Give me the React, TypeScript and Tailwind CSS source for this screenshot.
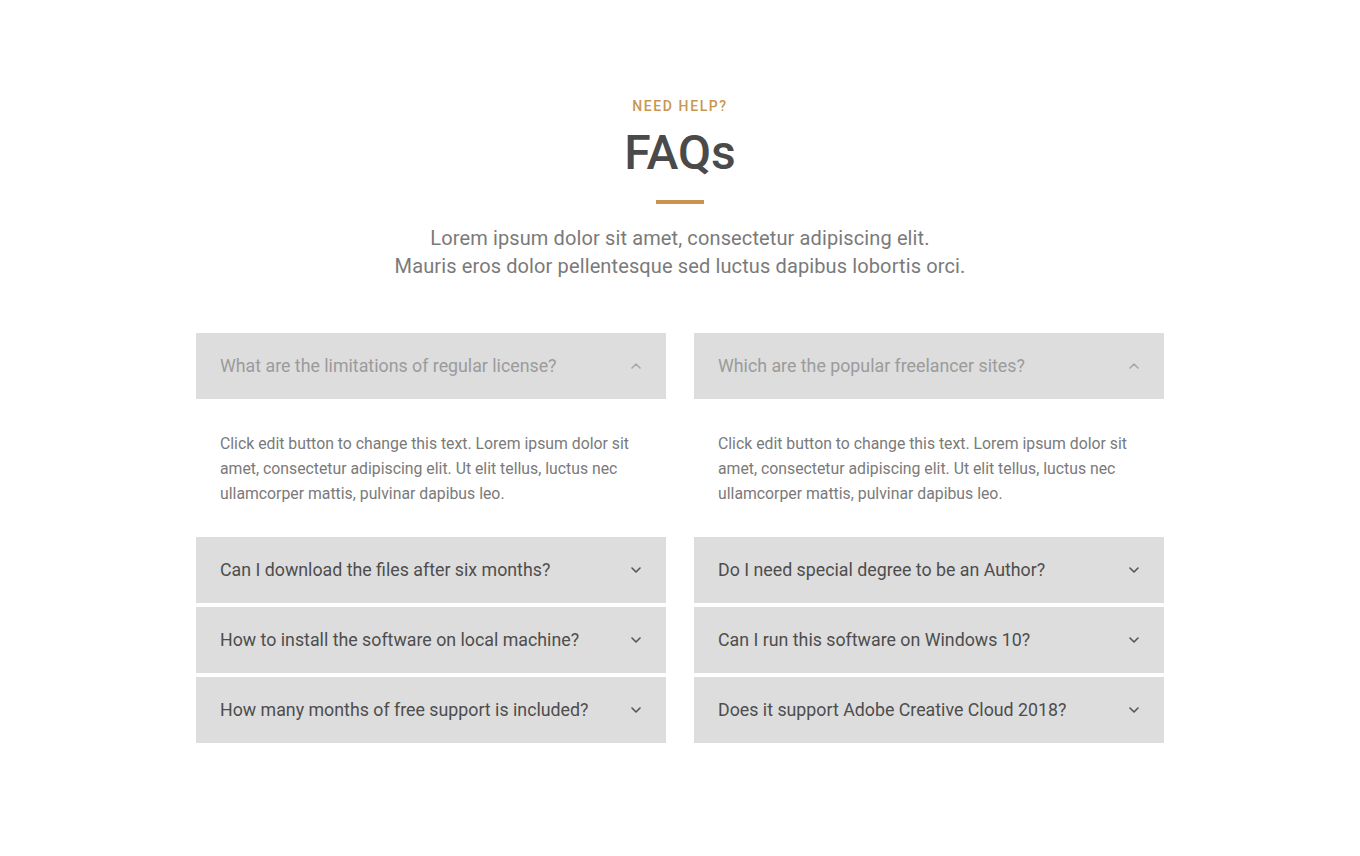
import React from 'react';

const faqsLeft = [
  { q: 'What are the limitations of regular license?', open: true },
  { q: 'Can I download the files after six months?' },
  { q: 'How to install the software on local machine?' },
  { q: 'How many months of free support is included?' },
];

const faqsRight = [
  { q: 'Which are the popular freelancer sites?', open: true },
  { q: 'Do I need special degree to be an Author?' },
  { q: 'Can I run this software on Windows 10?' },
  { q: 'Does it support Adobe Creative Cloud 2018?' },
];

const answer =
  'Click edit button to change this text. Lorem ipsum dolor sit amet, consectetur adipiscing elit. Ut elit tellus, luctus nec ullamcorper mattis, pulvinar dapibus leo.';

const Chevron = ({ up }: { up?: boolean }) => (
  <svg width="10" height="6" viewBox="0 0 10 6" fill="none" className={up ? 'rotate-180' : ''}>
    <path d="M1 1l4 4 4-4" stroke="currentColor" strokeWidth="1.6" strokeLinecap="round" strokeLinejoin="round" />
  </svg>
);

const Item = ({ q, open }: { q: string; open?: boolean }) => (
  <div>
    <div className="flex h-[66px] items-center justify-between bg-[#dddddd] pl-6 pr-[25px]">
      <span className={`text-[17.8px] ${open ? 'text-[#9b9b9b]' : 'text-[#4d4d4d]'}`}>{q}</span>
      <span className={open ? 'text-[#a8a8a8]' : 'text-[#555555]'}>
        <Chevron up={open} />
      </span>
    </div>
    {open && (
      <div className="px-6 pt-[32px] pb-[27px] text-[15.8px] leading-[25px] text-[#7a7a7a]">{answer}</div>
    )}
  </div>
);

export default function App() {
  return (
    <div className="min-h-[856px] bg-white font-['Roboto',sans-serif]">
      <div className="mx-auto flex w-[968px] flex-col items-center pt-[96px]">
        <p className="text-[14px] leading-[20px] font-medium tracking-[1.6px] text-[#c8974f]">NEED HELP?</p>
        <h1 className="mt-[8px] text-[48px] leading-[58px] font-medium text-[#4a4a4a]">FAQs</h1>
        <div className="mt-[18px] h-[4px] w-[48px] bg-[#c8944f]" />
        <p className="mt-[20px] text-center text-[20px] leading-[28px] tracking-[0.12px] text-[#7a7a7a]">
          Lorem ipsum dolor sit amet, consectetur adipiscing elit.
          <br />
          Mauris eros dolor pellentesque sed luctus dapibus lobortis orci.
        </p>
        <div className="mt-[53px] grid w-full grid-cols-2 gap-[28px]">
          {[faqsLeft, faqsRight].map((col, i) => (
            <div key={i} className="flex flex-col gap-[4px]">
              {col.map((f) => (
                <Item key={f.q} q={f.q} open={f.open} />
              ))}
            </div>
          ))}
        </div>
      </div>
    </div>
  );
}
